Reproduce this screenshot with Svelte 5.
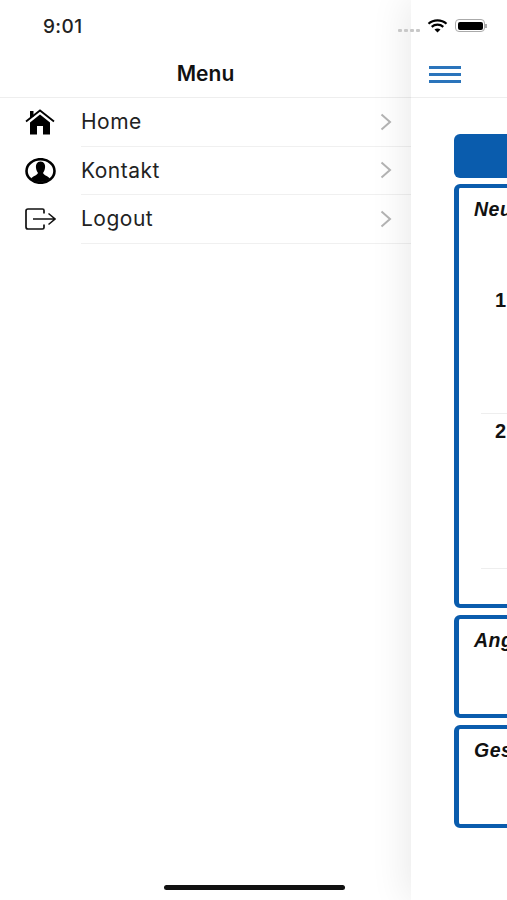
<script>
	const menuItems = [
		{ label: 'Home', icon: 'home' },
		{ label: 'Kontakt', icon: 'user' },
		{ label: 'Logout', icon: 'logout' }
	];
</script>

<div class="screen">
	<aside class="drawer">
		<div class="status-left">9:01</div>
		<div class="drawer-title">Menu</div>
		<ul class="menu">
			{#each menuItems as item}
				<li class="menu-row">
					<span class="menu-icon">
						{#if item.icon === 'home'}
							<svg width="30" height="26" viewBox="0 0 30 26">
								<path d="M1 12.500 L15 1.500 L29 12.500" fill="none" stroke="#000" stroke-width="1.800" />
								<rect x="5" y="2" width="3.500" height="6" fill="#000" />
								<path d="M5 13.500 L15 5.500 L25 13.500 V25.500 H18 V17 H12 V25.500 H5 Z" fill="#000" />
							</svg>
						{:else if item.icon === 'user'}
							<svg width="31" height="26" viewBox="0 0 31 26">
								<ellipse cx="15.500" cy="13" rx="14" ry="11.800" fill="none" stroke="#000" stroke-width="2.600" />
								<path d="M15.500 3.500 C19 3.500 20.500 6.500 20 10 C19.600 12.500 18.800 13.800 18 15 C19 17.500 23 18 25 20.500 C22.500 23 19 24 15.500 24 C12 24 8.500 23 6 20.500 C8 18 12 17.500 13 15 C12.200 13.800 11.400 12.500 11 10 C10.500 6.500 12 3.500 15.500 3.500 Z" fill="#000" />
							</svg>
						{:else}
							<svg width="31" height="22" viewBox="0 0 31 22">
								<path d="M19 5.500 V2.500 Q19 1 17.500 1 H3 Q1 1 1 3 V19 Q1 21 3 21 H17.500 Q19 21 19 19.500 V16.500" fill="none" stroke="#111" stroke-width="1.700" />
								<path d="M8 11 H29.500 M23.500 5.500 L30 11 L23.500 16.500" fill="none" stroke="#111" stroke-width="1.500" />
							</svg>
						{/if}
					</span>
					<span class="menu-body">
						<span class="menu-label">{item.label}</span>
						<svg class="chevron" width="12" height="18" viewBox="0 0 12 18">
							<path d="M1.500 1.500 L10 9 L1.500 16.500" fill="none" stroke="#b4b4b4" stroke-width="2" />
						</svg>
					</span>
				</li>
			{/each}
		</ul>
	</aside>

	<main class="panel">
		<div class="status-right">
			<span class="dots"><i></i><i></i><i></i><i></i></span>
			<svg class="wifi" width="21" height="14" viewBox="0 0 20 14">
				<path d="M1 4.800 C6 0.300 14 0.300 19 4.800" fill="none" stroke="#000" stroke-width="2.200" />
				<path d="M4.200 7.800 C7.500 5 12.500 5 15.800 7.800" fill="none" stroke="#000" stroke-width="2.200" />
				<path d="M7 10.500 C8.800 9 11.200 9 13 10.500 L10 13.500 Z" fill="#000" />
			</svg>
			<span class="battery"><span class="battery-fill"></span></span>
			<span class="battery-nub"></span>
		</div>
		<div class="panel-head">
			<span class="burger"><i></i><i></i><i></i></span>
		</div>
		<div class="panel-body">
			<div class="blue-bar"></div>
			<section class="card card-news">
				<h3>Neuigkeiten</h3>
				<div class="news-row news-one"><b>1</b></div>
				<div class="news-row news-two"><b>2</b></div>
			</section>
			<section class="card card-small">
				<h3>Angebote</h3>
			</section>
			<section class="card card-small">
				<h3>Geschäfte</h3>
			</section>
		</div>
	</main>

	<div class="home-indicator"></div>
</div>

<style>
	:global(body) {
		margin: 0;
		background: #fff;
	}

	.screen {
		position: relative;
		display: flex;
		width: 507px;
		height: 900px;
		overflow: hidden;
		background: #fff;
		font-family: Inter, "Liberation Sans", sans-serif;
		color: #111;
	}

	.drawer {
		flex: 0 0 411px;
		display: flex;
		flex-direction: column;
	}

	.status-left {
		height: 52px;
		box-sizing: border-box;
		padding: 16px 0 0 43px;
		font-size: 19px;
		line-height: 21px;
		font-weight: 500;
		letter-spacing: 0.4px;
		color: #222;
	}

	.drawer-title {
		height: 46px;
		line-height: 44px;
		box-sizing: border-box;
		text-align: center;
		font-size: 21px;
		font-weight: 600;
		color: #111;
		border-bottom: 1px solid #eee;
	}

	.menu {
		list-style: none;
		margin: 0;
		padding: 0;
	}

	.menu-row {
		display: flex;
		height: 48.500px;
	}

	.menu-icon {
		flex: 0 0 81px;
		display: flex;
		align-items: center;
		padding-left: 25px;
		box-sizing: border-box;
	}

	.menu-body {
		flex: 1;
		display: flex;
		align-items: center;
		justify-content: space-between;
		padding-right: 19px;
		border-bottom: 1px solid #f0f0f0;
	}

	.menu-label {
		font-size: 21px;
		letter-spacing: 0.5px;
		color: #222;
	}

	.panel {
		flex: 0 0 411px;
		display: flex;
		flex-direction: column;
		background: #fff;
		box-shadow: -4px 0 36px rgba(0, 0, 0, 0.09);
		z-index: 1;
	}

	.status-right {
		height: 52px;
		display: flex;
		align-items: flex-start;
		position: relative;
		padding: 19px 0 0 16px;
		box-sizing: border-box;
		gap: 7px;
	}

	.dots {
		position: absolute;
		left: -13px;
		top: 29px;
		display: flex;
		gap: 2px;
	}

	.dots i {
		width: 4px;
		height: 3px;
		background: #c8c8c8;
		border-radius: 1px;
	}

	.battery {
		width: 30px;
		height: 13px;
		border: 1.500px solid #aaa;
		border-radius: 4px;
		padding: 1.500px;
		box-sizing: border-box;
	}

	.battery-fill {
		display: block;
		height: 100%;
		background: #000;
		border-radius: 2px;
	}

	.battery-nub {
		width: 2px;
		height: 4px;
		margin: 5px 0 0 -7px;
		background: #aaa;
	}

	.panel-head {
		height: 46px;
		box-sizing: border-box;
		padding: 14px 0 0 18px;
		border-bottom: 1px solid #eee;
	}

	.burger {
		display: flex;
		flex-direction: column;
		gap: 4.500px;
		width: 32px;
	}

	.burger i {
		display: block;
		height: 2.500px;
		background: #2a74bb;
	}

	.panel-body {
		display: flex;
		flex-direction: column;
		padding: 36px 0 0 43px;
		width: 420px;
		box-sizing: border-box;
	}

	.blue-bar {
		height: 44px;
		background: #0a5cad;
		border-radius: 6px;
		margin-bottom: 6px;
	}

	.card {
		box-sizing: border-box;
		border: 4px solid #0a5cad;
		border-left-width: 5px;
		border-radius: 6px;
		padding: 10px 0 0 15px;
		margin-bottom: 7px;
	}

	.card h3 {
		margin: 0 0 1px;
		font-size: 19.500px;
		line-height: 22px;
		letter-spacing: 0.5px;
		font-style: italic;
		font-weight: 700;
		font-family: "Liberation Sans", sans-serif;
		color: #111;
		white-space: nowrap;
	}

	.card-news {
		height: 424px;
	}

	.card-small {
		height: 103px;
	}

	.news-row {
		margin-left: 7px;
		padding-left: 14px;
		font-size: 20px;
		font-family: "Liberation Sans", sans-serif;
	}

	.news-one {
		height: 193px;
		padding-top: 68px;
		box-sizing: border-box;
		border-bottom: 1px solid #eee;
	}

	.news-two {
		height: 155px;
		padding-top: 6px;
		box-sizing: border-box;
		border-bottom: 1px solid #eee;
	}

	.home-indicator {
		position: absolute;
		left: 164px;
		top: 885px;
		width: 181px;
		height: 5px;
		border-radius: 3px;
		background: #111;
		z-index: 2;
	}
</style>
